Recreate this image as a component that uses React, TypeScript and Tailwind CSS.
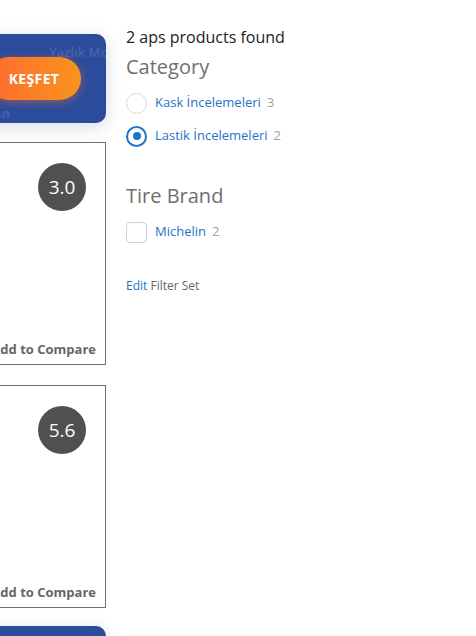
import React from 'react';

const font = { fontFamily: '"Open Sans", "Noto Sans", sans-serif' };

const ProductCard = ({ score }: { score: string }) => (
  <div className="h-[223px] shrink-0 border border-[#707070] bg-white flex flex-col">
    <div className="flex justify-end pt-[20px] pr-[19px]">
      <div className="w-[48px] h-[48px] rounded-full bg-[#505050] text-white text-[19px] flex items-center justify-center">
        {score}
      </div>
    </div>
    <div className="mt-auto pb-[5px] pr-[9px] text-right text-[13px] font-bold text-[#666666]">Add to Compare</div>
  </div>
);

const App = () => {
  return (
    <div className="w-[476px] h-[636px] overflow-hidden bg-white flex items-start" style={font}>
      {/* Left product column, scrolled off to the left */}
      <div className="ml-[-200px] w-[306px] shrink-0 flex flex-col pt-[34px]">
        <div className="h-[89px] shrink-0 rounded-[10px] bg-[#2b4b9b] overflow-hidden shadow-[0_4px_18px_rgba(40,60,120,0.18)] flex flex-col">
          <div className="pl-[249px] pt-[10px] overflow-hidden text-[13px] leading-[16px] font-semibold text-[#4763a9] whitespace-nowrap">Yazlık Mo</div>
          <div className="ml-[187px] mt-[-3px] w-[94px] h-[43px] shrink-0 rounded-full bg-gradient-to-r from-[#ff6a2c] to-[#f7931e] shadow-[0_2px_10px_rgba(255,120,40,0.45)] flex items-center justify-center text-white font-bold text-[14px] tracking-wide">
            KEŞFET
          </div>
          <div className="w-[210px] text-right text-[13px] leading-[16px] font-bold text-[#4763a9] mt-[5px] whitespace-nowrap">Kampanyalardan</div>
        </div>
        <div className="mt-[19px] shrink-0">
          <ProductCard score="3.0" />
        </div>
        <div className="mt-[20px] shrink-0">
          <ProductCard score="5.6" />
        </div>
        <div className="mt-[18px] h-[80px] shrink-0 rounded-[10px] bg-[#2b4b9b] shadow-[0_4px_18px_rgba(40,60,120,0.18)]" />
      </div>

      {/* Filters sidebar */}
      <div className="ml-[20px] flex flex-col pt-[26px]">
        <div className="text-[16px] leading-[22px] text-[#222222]">2 aps products found</div>
        <div className="mt-[6px] text-[20px] leading-[26px] text-[#6f6f6f]">Category</div>

        <div className="mt-[12px] flex items-center h-[22px]">
          <span className="w-[21px] h-[21px] rounded-full border border-[#d3d8e0] bg-white" />
          <span className="ml-[8px] text-[13px] text-[#1f73c9]">Kask İncelemeleri</span>
          <span className="ml-[6px] text-[13px] text-[#a0a0a0]">3</span>
        </div>
        <div className="mt-[11px] flex items-center h-[22px]">
          <span className="w-[21px] h-[21px] rounded-full border-2 border-[#1f73c9] bg-white flex items-center justify-center">
            <span className="w-[8px] h-[8px] rounded-full bg-[#1f73c9]" />
          </span>
          <span className="ml-[8px] text-[13px] text-[#1f73c9]">Lastik İncelemeleri</span>
          <span className="ml-[6px] text-[13px] text-[#a0a0a0]">2</span>
        </div>

        <div className="mt-[36px] text-[20px] leading-[26px] text-[#6f6f6f]">Tire Brand</div>
        <div className="mt-[12px] flex items-center h-[22px]">
          <span className="w-[21px] h-[21px] rounded-[4px] border border-[#c9d0da] bg-white" />
          <span className="ml-[8px] text-[13px] text-[#1f73c9]">Michelin</span>
          <span className="ml-[6px] text-[13px] text-[#a0a0a0]">2</span>
        </div>

        <div className="mt-[35px] text-[12px] leading-[16px]">
          <span className="text-[#1f73c9]">Edit</span> <span className="text-[#666666]">Filter Set</span>
        </div>
      </div>
    </div>
  );
};

export default App;
